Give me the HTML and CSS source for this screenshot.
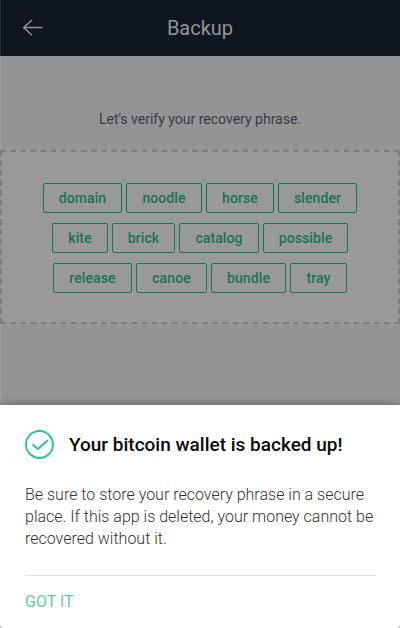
FILE: index.html
```html
<!DOCTYPE html>
<html lang="en">
<head>
<meta charset="utf-8">
<title>Backup</title>
<link rel="stylesheet" href="styles.css">
</head>
<body>
<div class="screen">
  <header class="bar">
    <svg class="back" width="22" height="18" viewBox="0 0 22 18" fill="none" stroke="currentColor" stroke-width="1.4"><path d="M20.500 8.500H1.500M10 1L1.700 8.500l8.300 7.800"/></svg>
    <h1 class="bar-title">Backup</h1>
  </header>
  <main class="content">
    <p class="prompt">Let's verify your recovery phrase.</p>
    <div class="phrase">
      <div class="row"><span class="word w79">domain</span><span class="word w76">noodle</span><span class="word w68">horse</span><span class="word w79">slender</span></div>
      <div class="row"><span class="word w56">kite</span><span class="word w63">brick</span><span class="word w80">catalog</span><span class="word w85">possible</span></div>
      <div class="row"><span class="word w79">release</span><span class="word w71">canoe</span><span class="word w75">bundle</span><span class="word w57">tray</span></div>
    </div>
  </main>
  <section class="sheet">
    <div class="sheet-head">
      <svg class="check" width="30" height="30" viewBox="0 0 30 30" fill="none" stroke="currentColor" stroke-width="1.9" stroke-linecap="round" stroke-linejoin="round"><circle cx="14.5" cy="14.500" r="13.5"/><path d="M8 14.800l4.800 4.200L22.500 10.500"/></svg>
      <h2 class="sheet-title">Your bitcoin wallet is backed up!</h2>
    </div>
    <p class="sheet-text">Be sure to store your recovery phrase in a secure<br>place. If this app is deleted, your money cannot be<br>recovered without it.</p>
    <div class="actions"><button class="got-it">GOT IT</button></div>
  </section>
</div>
</body>
</html>
```
FILE: styles.css
```css
* { box-sizing: border-box; }
body { margin: 0; font-family: Roboto, "Liberation Sans", sans-serif; background: #b8b8b8; }
h1, h2, p { margin: 0; }
.screen { height: 628px; display: flex; flex-direction: column; overflow: hidden; }
.bar { height: 56px; flex: none; display: grid; grid-template-columns: 44px 1fr 44px; align-items: center; background: #0f161f; color: #929395; box-shadow: inset 1px 0 #20272f; }
.back { margin-left: 22px; }
.bar-title { font-size: 20px; font-weight: 400; line-height: 24px; text-align: center; }
.content { height: 349px; flex: none; background: #949494; box-shadow: inset 1px 0 #9d9d9d; }
.prompt { padding-top: 53px; height: 94px; font-size: 14px; line-height: 20px; text-align: center; color: #3b3945; }
.phrase { height: 174px; padding-top: 31px; display: flex; flex-direction: column; gap: 10px; border: 2px dashed #7e7e7e; background: #999; }
.row { display: flex; justify-content: center; gap: 4px; }
.word { height: 30px; border: 1px solid #13765a; border-radius: 2px; font-size: 14px; font-weight: 500; line-height: 29px; text-align: center; color: #177358; letter-spacing: 0.1px; }
.w56 { width: 56px; }
.w57 { width: 57px; }
.w63 { width: 63px; }
.w68 { width: 68px; }
.w71 { width: 71px; }
.w75 { width: 75px; }
.w76 { width: 76px; }
.w79 { width: 79px; }
.w80 { width: 80px; }
.w85 { width: 85px; }
.sheet { position: relative; flex: 1; padding: 24px 24px 0 25px; background: #fff; border-radius: 0 0 4px 4px; box-shadow: 0 -1px 8px rgba(0, 0, 0, 0.3); }
.sheet-head { display: flex; align-items: center; gap: 14px; height: 31px; }
.check { flex: none; color: #27c794; }
.sheet-title { font-size: 19px; font-weight: 500; line-height: 24px; color: #0b0b0b; white-space: nowrap; }
.sheet-text { margin-top: 24px; font-size: 16px; font-weight: 300; line-height: 22px; color: #333; white-space: nowrap; }
.actions { margin-top: 25px; padding-top: 15px; border-top: 1px solid #e3e3e3; }
.got-it { display: block; padding: 0; border: 0; background: none; font: 400 16px/22px Roboto, sans-serif; color: #65caa3; }
```
